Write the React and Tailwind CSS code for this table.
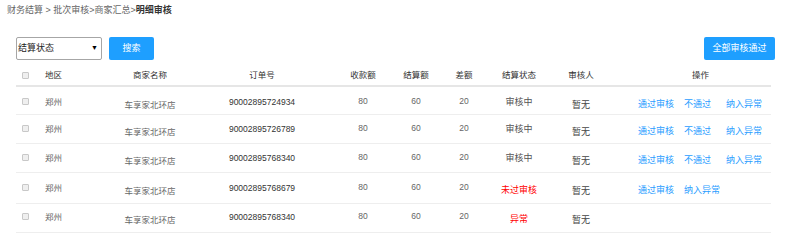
import React from "react";

const rows = [
  { order: "90002895724934", status: "审核中", red: false, ops: ["通过审核", "不通过", "纳入异常"], pt: "pt-[2px]", h: "h-[28px]" },
  { order: "90002895726789", status: "审核中", red: false, ops: ["通过审核", "不通过", "纳入异常"], pt: "pt-[1px]", h: "h-[29px]" },
  { order: "90002895768340", status: "审核中", red: false, ops: ["通过审核", "不通过", "纳入异常"], pt: "pt-[1px]", h: "h-[29px]" },
  { order: "90002895768679", status: "未过审核", red: true, ops: ["通过审核", "纳入异常"], pt: "pt-[2px]", h: "h-[31px]" },
  { order: "90002895768340", status: "异常", red: true, ops: [], pt: "pt-0", h: "h-[29px]" },
];

const grid =
  "grid grid-cols-[20px_64px_100px_124px_78px_28px_68px_42px_82px_149px]";

function Box() {
  return (
    <div className="w-[7px] h-[7px] ml-[6px] border border-[#c8c8c8] rounded-[1px] bg-[#efefef]" />
  );
}

export default function App() {
  return (
    <div className="w-[800px] h-[240px] bg-white overflow-hidden font-['Liberation_Sans','Noto_Sans_CJK_SC',sans-serif]">
      <div className="pl-[7px] pt-[4px] text-[9px] leading-[12px] text-[#666]">
        财务结算 &gt; 批次审核&gt;商家汇总&gt;
        <span className="text-[#333] font-bold">明细审核</span>
      </div>

      <div className="mt-[21px] pl-[16px] pr-[25px] flex justify-between h-[23px]">
        <div className="flex gap-[7px]">
          <div className="w-[86px] h-[23px] border border-[#a6a6a6] rounded-[2px] bg-white flex items-center justify-between pl-[1px] pr-[3px] text-[9px] text-[#222]">
            <span>结算状态</span>
            <span className="text-[7px] text-black">▼</span>
          </div>
          <div className="w-[45px] h-[23px] rounded-[2px] bg-[#1E9FFF] text-white text-[9px] flex items-center justify-center">
            搜索
          </div>
        </div>
        <div className="w-[71px] h-[23px] rounded-[2px] bg-[#1E9FFF] text-white text-[9px] flex items-center justify-center">
          全部审核通过
        </div>
      </div>

      <div className="ml-[16px] w-[755px] text-[8.5px] leading-[12px]">
        <div className={`${grid} h-[27px] pt-[5px] items-center border-b-2 border-[#e6e6e6] text-[#333]`}>
          <div><Box /></div>
          <div className="pl-[9px]">地区</div>
          <div className="text-center">商家名称</div>
          <div className="text-center">订单号</div>
          <div className="text-center">收款额</div>
          <div className="text-center whitespace-nowrap">结算额</div>
          <div className="text-center">差额</div>
          <div className="text-center whitespace-nowrap">结算状态</div>
          <div className="text-center">审核人</div>
          <div className="text-center pl-[8px]">操作</div>
        </div>

        {rows.map((r, i) => (
          <div
            key={i}
            className={`${grid} ${r.h} ${r.pt} items-start border-b border-[#eeeeee] text-[#666]`}
          >
            <div className="pt-[9px]"><Box /></div>
            <div className="pl-[9px] pt-[7px]">郑州</div>
            <div className="text-center pt-[10px]">车享家北环店</div>
            <div className="text-center pt-[7px] text-[#333]">{r.order}</div>
            <div className="text-center pt-[6px]">80</div>
            <div className="text-center pt-[6px]">60</div>
            <div className="text-center pt-[6px]">20</div>
            <div
              className={`text-center whitespace-nowrap text-[9px] ${r.red ? "pt-[9px] text-[#ff0000]" : "pt-[7px] text-[#555]"}`}
            >
              {r.status}
            </div>
            <div className="text-center pt-[10px] text-[9px] text-[#444]">暂无</div>
            <div className="pl-[16px] pt-[9px] flex text-[9px] text-[#2a9dff]">
              {r.ops.map((o, j) => (
                <span
                  key={j}
                  className={j === 0 ? "mr-[10px]" : j === 1 && r.ops.length === 3 ? "mr-[15px]" : ""}
                >
                  {o}
                </span>
              ))}
            </div>
          </div>
        ))}
      </div>
    </div>
  );
}
